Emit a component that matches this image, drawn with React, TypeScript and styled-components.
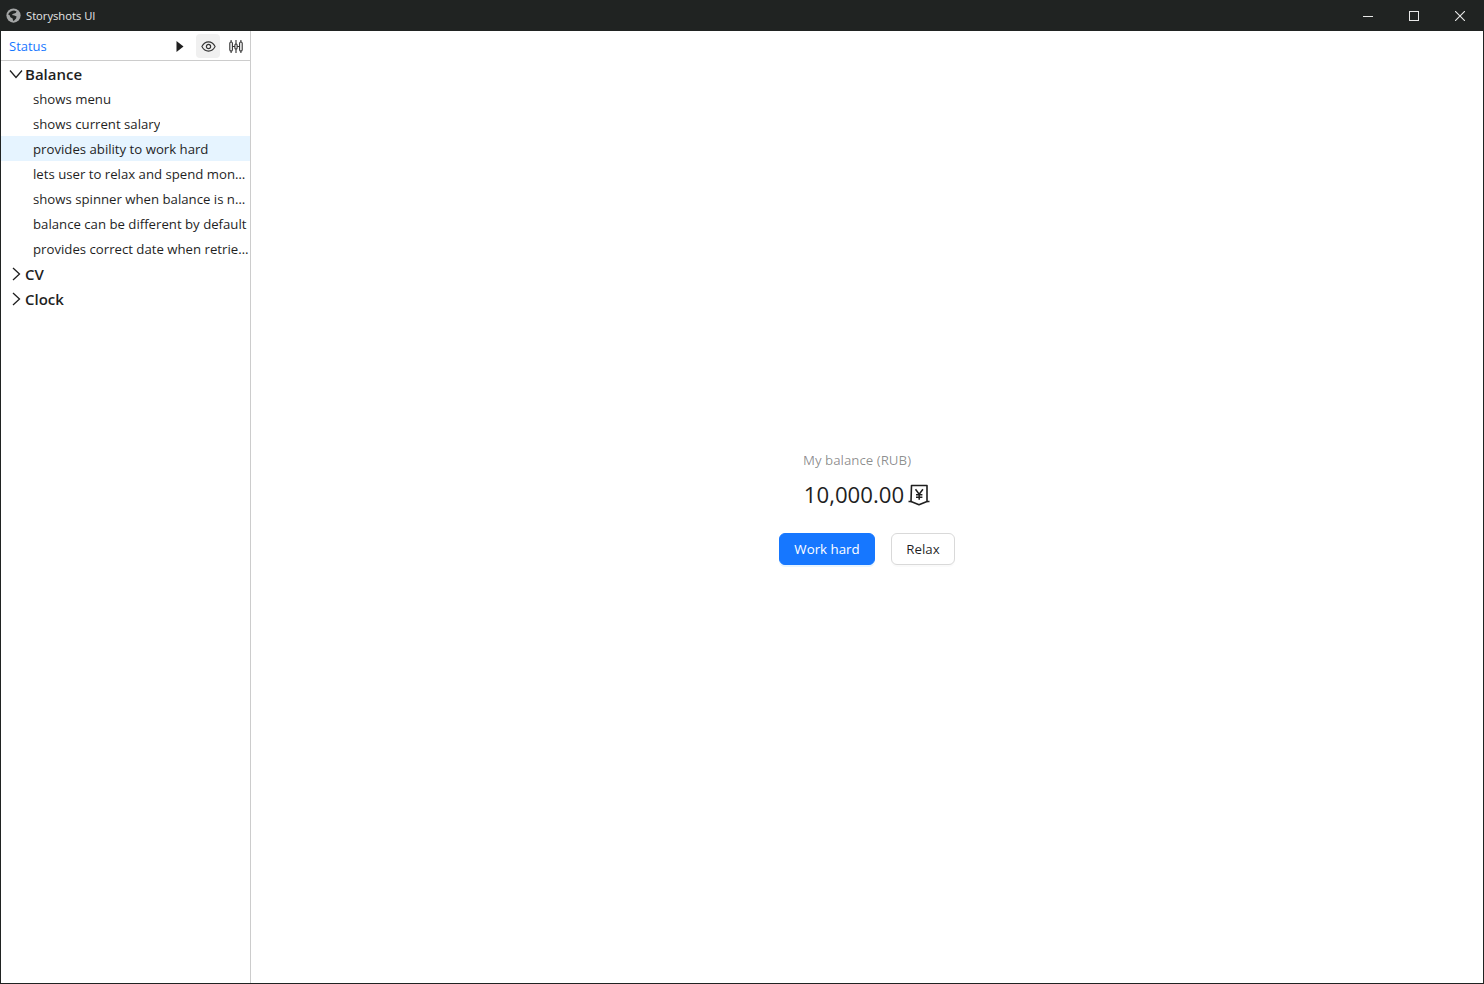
import React from 'react';
import styled, {createGlobalStyle} from 'styled-components';

const GlobalStyle = createGlobalStyle`
  html, body {
    margin: 0;
    padding: 0;
    background: #fff;
  }

  * {
    box-sizing: border-box;
  }
`

const font = `"Open Sans", "Noto Sans", "Liberation Sans", sans-serif`;

const balanceStories = [
    'shows menu',
    'shows current salary',
    'provides ability to work hard',
    'lets user to relax and spend money',
    'shows spinner when balance is not loaded',
    'balance can be different by default',
    'provides correct date when retrieving balance',
];

const GlobeIcon = () => (
    <svg width="15" height="15" viewBox="0 0 16 16">
        <circle cx="8" cy="8" r="7.6" fill="#a3a5a5"/>
        <path
            d="M5.5 3.2l3.2-.6 2.6 1-1 1.8-2.6.6-1.6 1.5 2.8.4 2.4 1.2-.6 2.2-2.2 2.4-1-.2-.4-2.2-2.4-1.4-.8-2.2-1.6-.8c.5-1.6 1.9-3 4.2-3.7z"
            fill="#202322"
        />
    </svg>
);

const PlayIcon = () => (
    <svg width="8" height="11" viewBox="0 0 8 11">
        <path d="M0.5 0L7.5 5.5L0.5 11z" fill="#1f1f1f"/>
    </svg>
);

const EyeIcon = () => (
    <svg width="15" height="11" viewBox="0 0 16 12" fill="none" stroke="#333">
        <path d="M0.8 6C2.6 2.6 5 1 8 1s5.4 1.6 7.2 5c-1.8 3.4-4.2 5-7.2 5S2.6 9.4.8 6z" strokeWidth="1.2"/>
        <circle cx="8" cy="6" r="2.3" strokeWidth="1.3"/>
    </svg>
);

const SlidersIcon = () => (
    <svg width="14" height="13" viewBox="0 0 14 13" fill="none" stroke="#333" strokeWidth="1.1">
        <rect x="0.8" y="2" width="2.6" height="9" rx="1.3"/>
        <path d="M2.1 0v2M2.1 11v2"/>
        <rect x="5.9" y="4" width="2.2" height="5" rx="1"/>
        <path d="M7 0v4M7 9v4M3.4 6.5h2.5M8.1 6.5h2.5"/>
        <rect x="10.6" y="2" width="2.6" height="9" rx="1.3"/>
        <path d="M11.9 0v2M11.9 11v2"/>
    </svg>
);

const ChevronDownIcon = () => (
    <svg width="14" height="14" viewBox="0 0 14 14" fill="none" stroke="#1f1f1f" strokeWidth="1.3">
        <path d="M1 3.5l6 7 6-7"/>
    </svg>
);

const ChevronRightIcon = () => (
    <svg width="14" height="14" viewBox="0 0 14 14" fill="none" stroke="#1f1f1f" strokeWidth="1.3">
        <path d="M4 1l6.5 6-6.5 6"/>
    </svg>
);

const YenTagIcon = () => (
    <svg width="22" height="22" viewBox="0 0 22 22" fill="none" stroke="#1f1f1f">
        <path d="M3.5 1.5h15.5v16l-8 3.2-8-3.2z" strokeWidth="1.6" strokeLinejoin="round"/>
        <path d="M0.5 17.5h3M19 17.5h2.5" strokeWidth="1.4"/>
        <path d="M7.5 5.2l3.7 5 3.7-5M11.2 10.2v5.6M8 10.8h6.4M8 13.2h6.4" strokeWidth="1.5"/>
    </svg>
);

export default function App() {
    return (
        <Window>
            <GlobalStyle/>
            <TitleBar>
                <TitleLeft>
                    <GlobeIcon/>
                    <TitleText>Storyshots UI</TitleText>
                </TitleLeft>
                <WindowControls>
                    <WindowButton>
                        <svg width="10" height="10" viewBox="0 0 10 10">
                            <path d="M0 5.5h10" stroke="#e8e8e8"/>
                        </svg>
                    </WindowButton>
                    <WindowButton>
                        <svg width="10" height="10" viewBox="0 0 10 10">
                            <rect x="0.5" y="0.5" width="9" height="9" fill="none" stroke="#e8e8e8"/>
                        </svg>
                    </WindowButton>
                    <WindowButton>
                        <svg width="10" height="10" viewBox="0 0 10 10">
                            <path d="M0 0l10 10M10 0L0 10" stroke="#e8e8e8" strokeWidth="1.1"/>
                        </svg>
                    </WindowButton>
                </WindowControls>
            </TitleBar>

            <Body>
                <Sidebar>
                    <Toolbar>
                        <StatusLabel>Status</StatusLabel>
                        <ToolButton>
                            <PlayIcon/>
                        </ToolButton>
                        <ToolButton active>
                            <EyeIcon/>
                        </ToolButton>
                        <ToolButton>
                            <SlidersIcon/>
                        </ToolButton>
                    </Toolbar>

                    <Tree>
                        <KindRow>
                            <ChevronDownIcon/>
                            <span>Balance</span>
                        </KindRow>
                        {balanceStories.map(story => (
                            <StoryRow key={story} selected={story === balanceStories[2]}>
                                <StoryName>{story}</StoryName>
                            </StoryRow>
                        ))}
                        <KindRow>
                            <ChevronRightIcon/>
                            <span>CV</span>
                        </KindRow>
                        <KindRow>
                            <ChevronRightIcon/>
                            <span>Clock</span>
                        </KindRow>
                    </Tree>
                </Sidebar>

                <Preview>
                    <BalanceBox>
                        <BalanceLabel>My balance (RUB)</BalanceLabel>
                        <Amount>
                            <span>10,000.00</span>
                            <YenTagIcon/>
                        </Amount>
                        <Actions>
                            <Button primary>Work hard</Button>
                            <Button>Relax</Button>
                        </Actions>
                    </BalanceBox>
                </Preview>
            </Body>
        </Window>
    );
}

const Window = styled.div`
  display: flex;
  flex-direction: column;
  width: 1484px;
  height: 984px;
  overflow: hidden;
  background: #fff;
  border: 1px solid #202322;
  border-top: none;
  font-family: ${font};
  color: #1f1f1f;
`

const TitleBar = styled.div`
  flex: none;
  display: flex;
  justify-content: space-between;
  align-items: stretch;
  height: 31px;
  margin: 0 -1px;
  background: #202322;
`

const TitleLeft = styled.div`
  display: flex;
  align-items: center;
  gap: 5px;
  padding: 0 0 1px 6px;
`

const TitleText = styled.span`
  font-size: 11.2px;
  color: #e6e6e6;
`

const WindowControls = styled.div`
  display: flex;
  margin-right: 1px;
`

const WindowButton = styled.div`
  display: flex;
  align-items: center;
  justify-content: center;
  width: 46px;
`

const Body = styled.div`
  flex: 1;
  display: flex;
  min-height: 0;
`

const Sidebar = styled.div`
  flex: none;
  width: 250px;
  border-right: 1px solid #ccc;
`

const Toolbar = styled.div`
  display: flex;
  align-items: center;
  gap: 4px;
  height: 30px;
  padding: 1px 2px 0 8px;
  border-bottom: 1px solid #ccc;
`

const StatusLabel = styled.span`
  flex: 1;
  font-size: 13px;
  color: #1677ff;
`

const ToolButton = styled.div<{ active?: boolean }>`
  display: flex;
  align-items: center;
  justify-content: center;
  width: 24px;
  height: 24px;
  border-radius: 4px;
  background: ${({active}) => (active ? '#f0f0f0' : 'transparent')};
`

const Tree = styled.div`
  display: flex;
  flex-direction: column;
`

const KindRow = styled.div`
  display: flex;
  align-items: center;
  gap: 2px;
  height: 25px;
  padding-left: 8px;
  font-size: 15px;
  font-weight: 600;
`

const StoryRow = styled.div<{ selected?: boolean }>`
  display: flex;
  align-items: center;
  height: 25px;
  padding: 0 1px 0 32px;
  background: ${({selected}) => (selected ? '#e6f4ff' : 'transparent')};
`

const StoryName = styled.span`
  overflow: hidden;
  white-space: nowrap;
  text-overflow: ellipsis;
  font-size: 13.2px;
`

const Preview = styled.div`
  flex: 1;
  display: flex;
  align-items: center;
  justify-content: center;
`

const BalanceBox = styled.div`
  display: flex;
  flex-direction: column;
  align-items: center;
`

const BalanceLabel = styled.div`
  font-size: 13.3px;
  line-height: 20px;
  color: rgba(0, 0, 0, 0.45);
  margin-right: 20px;
`

const Amount = styled.div`
  display: flex;
  align-items: center;
  gap: 4px;
  margin-top: 9px;
  font-size: 22.2px;
  line-height: 32px;
`

const Actions = styled.div`
  display: flex;
  gap: 16px;
  margin-top: 22px;
`

const Button = styled.div<{ primary?: boolean }>`
  display: flex;
  align-items: center;
  justify-content: center;
  height: 32px;
  width: ${({primary}) => (primary ? '96px' : '64px')};
  border-radius: 6px;
  white-space: nowrap;
  font-size: 13.3px;
  border: 1px solid ${({primary}) => (primary ? '#1677ff' : '#d9d9d9')};
  background: ${({primary}) => (primary ? '#1677ff' : '#fff')};
  color: ${({primary}) => (primary ? '#fff' : 'rgba(0, 0, 0, 0.88)')};
  box-shadow: 0 2px 0 ${({primary}) => (primary ? 'rgba(5, 145, 255, 0.1)' : 'rgba(0, 0, 0, 0.02)')};
`
